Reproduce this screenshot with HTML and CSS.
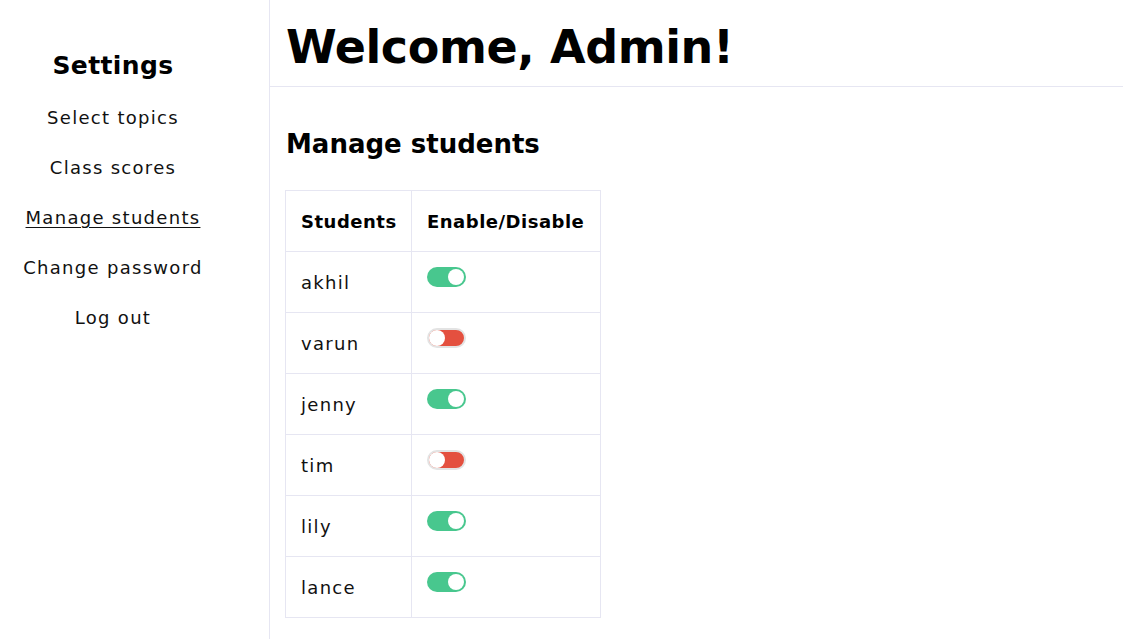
FILE: index.html
```html
<!DOCTYPE html>
<html>
<head>
<meta charset="utf-8">
<link rel="stylesheet" href="styles.css">
</head>
<body>
<div class="layout">
  <aside class="sidebar">
    <h2 class="side-title">Settings</h2>
    <nav class="side-nav">
      <a class="side-link">Select topics</a>
      <a class="side-link">Class scores</a>
      <a class="side-link active">Manage students</a>
      <a class="side-link">Change password</a>
      <a class="side-link">Log out</a>
    </nav>
  </aside>
  <main class="main">
    <header class="header">
      <h1 class="welcome">Welcome, Admin!</h1>
    </header>
    <section class="content">
      <h2 class="section-title">Manage students</h2>
      <table class="students">
        <thead>
          <tr><th>Students</th><th>Enable/Disable</th></tr>
        </thead>
        <tbody>
          <tr><td>akhil</td><td><span class="toggle on"><span class="knob"></span></span></td></tr>
          <tr><td>varun</td><td><span class="toggle off"><span class="knob"></span></span></td></tr>
          <tr><td>jenny</td><td><span class="toggle on"><span class="knob"></span></span></td></tr>
          <tr><td>tim</td><td><span class="toggle off"><span class="knob"></span></span></td></tr>
          <tr><td>lily</td><td><span class="toggle on"><span class="knob"></span></span></td></tr>
          <tr><td>lance</td><td><span class="toggle on"><span class="knob"></span></span></td></tr>
        </tbody>
      </table>
    </section>
  </main>
</div>
</body>
</html>
```
FILE: styles.css
```css
* { box-sizing: border-box; }
html, body { margin: 0; padding: 0; background: #fff; }
body {
  font-family: "DejaVu Sans", "Open Sans", sans-serif;
  color: #111;
}
.layout {
  display: flex;
  min-height: 639px;
}
.sidebar {
  width: 270px;
  flex: none;
  border-right: 1px solid #e6e6f2;
  display: flex;
  flex-direction: column;
  align-items: center;
  padding-right: 43px;
  padding-top: 47px;
}
.side-title {
  margin: 0;
  font-size: 25px;
  font-weight: 700;
  line-height: 38px;
  letter-spacing: 0.4px;
  color: #000;
}
.side-nav {
  display: flex;
  flex-direction: column;
  align-items: center;
  margin-top: 8px;
}
.side-link {
  font-size: 18px;
  line-height: 50px;
  letter-spacing: 1.3px;
  color: #111;
  text-decoration: none;
}
.side-link.active { text-decoration: underline; text-underline-offset: 3px; }
.main { flex: 1; }
.header {
  height: 87px;
  border-bottom: 1px solid #e6e6f2;
  padding-left: 16px;
  padding-top: 24px;
}
.welcome {
  margin: 0;
  font-size: 46px;
  font-weight: 700;
  letter-spacing: -0.4px;
  color: #000;
  line-height: 46px;
}
.content { padding: 39px 16px 0 16px; }
.section-title {
  margin: 0 0 28px 0;
  font-size: 26px;
  font-weight: 700;
  line-height: 36px;
  color: #000;
}
.students {
  border-collapse: collapse;
  margin-left: -1px;
}
.students th, .students td {
  border: 1px solid #e6e6f2;
  text-align: left;
  vertical-align: top;
  padding: 0 15px;
  height: 61px;
}
.students th {
  font-size: 18px;
  font-weight: 700;
  letter-spacing: 0.5px;
  color: #000;
  vertical-align: middle;
}
.students th:first-child { width: 126px; padding-right: 12px; }
.students th:last-child { width: 189px; }
.students td:first-child {
  font-size: 18px;
  letter-spacing: 1.3px;
  vertical-align: middle;
  padding-top: 0;
}
.students td:last-child { padding-top: 15px; }
.toggle {
  display: block;
  width: 39px;
  height: 20px;
  border-radius: 10px;
  position: relative;
}
.toggle.on { background: #48c78e; }
.toggle.off { background: #e4503f; border: 2px solid #e3e3e3; }
.knob {
  position: absolute;
  width: 16px;
  height: 16px;
  border-radius: 50%;
  background: #fff;
  top: 2px;
  right: 2px;
}
.toggle.off .knob { left: 0; top: 0; right: auto; width: 16px; height: 16px; }
```
